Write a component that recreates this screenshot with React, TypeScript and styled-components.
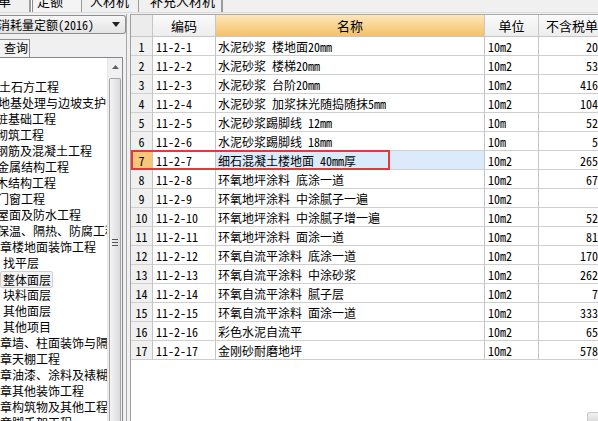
import styled, { createGlobalStyle, css } from 'styled-components';

const GlobalStyle = createGlobalStyle`
  html, body {
    margin: 0;
    padding: 0;
  }
  body {
    background: #f0f0f0;
    overflow: hidden;
    font-family: 'Noto Sans Mono CJK SC', 'Noto Sans CJK SC', sans-serif;
    font-size: 12px;
    color: #000;
  }
`;

const Window = styled.div`
  width: 598px;
  height: 421px;
  display: flex;
  flex-direction: column;
  overflow: hidden;
`;

/* top tab strip, mostly scrolled out of view */
const TabStrip = styled.div`
  flex: none;
  height: 12px;
  display: flex;
  align-items: flex-end;
  overflow: hidden;
  border-bottom: 1px solid #dadada;
`;

const Tab = styled.div<{ $w: number; $pad: number; $active?: boolean }>`
  flex: none;
  box-sizing: border-box;
  width: ${(p) => p.$w}px;
  height: 24px;
  padding: 0 0 0 ${(p) => p.$pad}px;
  display: flex;
  align-items: center;
  font-size: 13px;
  white-space: nowrap;
  overflow: hidden;
  border-right: 1px solid #9c9c9c;
  ${(p) =>
    p.$active &&
    css`
      border-left: 1px solid #9c9c9c;
      box-shadow: inset 1px 0 0 #fff, inset 2px 0 0 #8a8a8a;
      background: #f4f4f4;
    `}
`;

const Main = styled.div`
  flex: 1;
  min-height: 0;
  display: flex;
  gap: 3px;
  padding-top: 1px;
`;

/* left side: library picker + chapter tree */
const LeftPanel = styled.div`
  flex: none;
  width: 127px;
  display: flex;
  flex-direction: column;
  border-right: 1px solid #a8a8a8;
  box-sizing: border-box;
`;

const Dropdown = styled.div`
  flex: none;
  box-sizing: border-box;
  height: 19px;
  margin-top: 1px;
  display: flex;
  align-items: center;
  justify-content: space-between;
  padding-right: 5px;
  border: 1px solid #8e8e8e;
  border-left: none;
  border-radius: 0 3px 3px 0;
  background: linear-gradient(#f7f7f7, #e3e3e3);
  white-space: nowrap;
  overflow: hidden;

  span {
    margin-left: -2px;
  }
`;

const QueryTab = styled.div`
  flex: none;
  box-sizing: border-box;
  width: 30px;
  height: 18px;
  margin-top: 5px;
  padding-left: 4px;
  line-height: 16px;
  white-space: nowrap;
  overflow: hidden;
  border: 1px solid #8e8e8e;
  border-left: none;
  border-bottom: none;
  background: #f4f4f4;
`;

const ListBox = styled.div`
  flex: 1;
  min-height: 0;
  width: 123px;
  box-sizing: border-box;
  display: flex;
  border: 1px solid #828790;
  border-left: none;
  border-bottom: none;
  background: #fff;
`;

const Tree = styled.div`
  flex: 1;
  min-width: 0;
  overflow: hidden;
  padding-top: 21px;
`;

const TreeItem = styled.div<{ $shift?: number; $selected?: boolean }>`
  height: 16px;
  line-height: 16px;
  white-space: nowrap;

  span {
    display: inline-block;
    margin-left: ${(p) => p.$shift ?? 0}px;
    padding: 0 1px;
    line-height: 15px;
    ${(p) =>
      p.$selected &&
      css`
        background: #f3f3f3;
        border: 1px solid #cfcfcf;
        border-radius: 2px;
        margin-left: 0;
        padding: 0 1px 0 2px;
      `}
  }
`;

const ScrollBar = styled.div`
  flex: none;
  width: 14px;
  display: flex;
  flex-direction: column;
  background: #f0f0f0;
  border-left: 1px solid #e6e6e6;
`;

const ScrollArrow = styled.div`
  flex: none;
  height: 18px;
  display: flex;
  align-items: center;
  justify-content: center;
`;

const Thumb = styled.div`
  flex: 1;
  margin: 2px 1px 0;
  padding-bottom: 16px;
  border: 1px solid #a4a4a4;
  border-bottom: none;
  border-radius: 2px 2px 0 0;
  background: linear-gradient(to right, #f4f4f4, #dadada);
  display: flex;
  align-items: center;
  justify-content: center;
`;

const Grip = styled.div`
  width: 6px;
  height: 7px;
  background: repeating-linear-gradient(#555 0 1px, transparent 1px 3px);
`;

/* right side: quota grid */
const Grid = styled.div`
  flex: 1;
  min-width: 0;
  position: relative;
  overflow: hidden;
  background: #fff;
  border-top: 1px solid #a9a9a9;
  border-left: 1px solid #a0a0a0;
`;

const COLS = '22px 63px 269px 54px 80px';

const HeaderRow = styled.div`
  width: 488px;
  height: 22px;
  display: grid;
  grid-template-columns: ${COLS};
`;

const HeadCell = styled.div<{ $hot?: boolean; $corner?: boolean }>`
  box-sizing: border-box;
  display: flex;
  align-items: center;
  justify-content: center;
  font-size: 13px;
  white-space: nowrap;
  border-right: 1px solid #c6c6c6;
  border-bottom: 1px solid #c6c6c6;
  background: ${(p) =>
    p.$hot
      ? 'linear-gradient(#fde6bb, #f4c168)'
      : p.$corner
      ? '#ececec'
      : 'linear-gradient(#fafafa, #ededed)'};
`;

const Row = styled.div`
  width: 488px;
  height: 19px;
  display: grid;
  grid-template-columns: ${COLS};
`;

const Cell = styled.div<{ $align?: 'left' | 'center' | 'right'; $bg?: string }>`
  box-sizing: border-box;
  display: flex;
  align-items: center;
  justify-content: ${(p) =>
    p.$align === 'center' ? 'center' : p.$align === 'right' ? 'flex-end' : 'flex-start'};
  padding: 0 ${(p) => (p.$align === 'right' ? 2 : 0)}px 0 ${(p) => (p.$align === 'left' ? 3 : 0)}px;
  white-space: nowrap;
  overflow: hidden;
  border-right: 1px solid #c4c4c4;
  border-bottom: 1px solid #cfcfcf;
  background: ${(p) => p.$bg ?? '#fff'};
`;

const NameCell = styled(Cell)`
  padding-left: 2px;
`;

const Highlight = styled.div`
  position: absolute;
  left: 0;
  top: 135px;
  width: 259px;
  height: 20px;
  box-sizing: border-box;
  border: 2px solid #e2393c;
  pointer-events: none;
`;

const Corner = styled.div`
  position: absolute;
  right: 0;
  bottom: 0;
  width: 10px;
  height: 8px;
  border-radius: 3px 0 0 0;
  background: linear-gradient(#f2f2f2, #dcdcdc);
  border: 1px solid #c8c8c8;
  border-right: none;
  border-bottom: none;
`;

const tabs = [
  { label: '清单', w: 30, pad: 0, hide: true },
  { label: '定额', w: 52, pad: 6, active: true },
  { label: '人材机', w: 57, pad: 8 },
  { label: '补充人材机', w: 83, pad: 11 },
  { label: '', w: 0, pad: 0 },
];

const chapters: { text: string; shift?: number; selected?: boolean }[] = [
  { text: '土石方工程', shift: -2 },
  { text: '地基处理与边坡支护', shift: -3 },
  { text: '桩基础工程', shift: -5 },
  { text: '砌筑工程', shift: -5 },
  { text: '钢筋及混凝土工程', shift: -5 },
  { text: '金属结构工程', shift: -4 },
  { text: '木结构工程', shift: -5 },
  { text: '门窗工程', shift: -4 },
  { text: '屋面及防水工程', shift: -4 },
  { text: '保温、隔热、防腐工程', shift: -4 },
  { text: '章楼地面装饰工程', shift: -1 },
  { text: '找平层', shift: 2 },
  { text: '整体面层', shift: 2, selected: true },
  { text: '块料面层', shift: 2 },
  { text: '其他面层', shift: 2 },
  { text: '其他项目', shift: 2 },
  { text: '章墙、柱面装饰与隔断', shift: -1 },
  { text: '章天棚工程', shift: -1 },
  { text: '章油漆、涂料及裱糊工程', shift: -1 },
  { text: '章其他装饰工程', shift: -1 },
  { text: '章构筑物及其他工程', shift: -1 },
  { text: '章脚手架工程', shift: -1 },
];

const rows = [
  ['11-2-1', '水泥砂浆 楼地面20mm', '10m2', '20.73'],
  ['11-2-2', '水泥砂浆 楼梯20mm', '10m2', '53.18'],
  ['11-2-3', '水泥砂浆 台阶20mm', '10m2', '416.52'],
  ['11-2-4', '水泥砂浆 加浆抹光随捣随抹5mm', '10m2', '104.37'],
  ['11-2-5', '水泥砂浆踢脚线 12mm', '10m', '52.64'],
  ['11-2-6', '水泥砂浆踢脚线 18mm', '10m', '5.81'],
  ['11-2-7', '细石混凝土楼地面 40mm厚', '10m2', '265.09'],
  ['11-2-8', '环氧地坪涂料 底涂一道', '10m2', '67.45'],
  ['11-2-9', '环氧地坪涂料 中涂腻子一遍', '10m2', '8.6'],
  ['11-2-10', '环氧地坪涂料 中涂腻子增一遍', '10m2', '52.33'],
  ['11-2-11', '环氧地坪涂料 面涂一道', '10m2', '81.27'],
  ['11-2-12', '环氧自流平涂料 底涂一道', '10m2', '170.56'],
  ['11-2-13', '环氧自流平涂料 中涂砂浆', '10m2', '262.14'],
  ['11-2-14', '环氧自流平涂料 腻子层', '10m2', '7.92'],
  ['11-2-15', '环氧自流平涂料 面涂一道', '10m2', '333.48'],
  ['11-2-16', '彩色水泥自流平', '10m2', '65.70'],
  ['11-2-17', '金刚砂耐磨地坪', '10m2', '578.21'],
];

const SELECTED = 7;

export default function App() {
  return (
    <>
      <GlobalStyle />
      <Window>
        <TabStrip>
          {tabs.map((t, i) => (
            <Tab key={i} $w={t.w} $pad={t.pad} $active={t.active}>
              {t.hide ? <span style={{ marginLeft: -15 }}>{t.label}</span> : t.label}
            </Tab>
          ))}
        </TabStrip>
        <Main>
          <LeftPanel>
            <Dropdown>
              <span>消耗量定额(2016)</span>
              <svg width="8" height="5" viewBox="0 0 8 5">
                <polygon points="0,0 8,0 4,5" fill="#222" />
              </svg>
            </Dropdown>
            <QueryTab>查询</QueryTab>
            <ListBox>
              <Tree>
                {chapters.map((c, i) => (
                  <TreeItem key={i} $shift={c.shift} $selected={c.selected}>
                    <span>{c.text}</span>
                  </TreeItem>
                ))}
              </Tree>
              <ScrollBar>
                <ScrollArrow>
                  <svg width="7" height="4" viewBox="0 0 7 4">
                    <polygon points="0,4 7,4 3.5,0" fill="#606060" />
                  </svg>
                </ScrollArrow>
                <Thumb>
                  <Grip />
                </Thumb>
              </ScrollBar>
            </ListBox>
          </LeftPanel>
          <Grid>
            <HeaderRow>
              <HeadCell $corner />
              <HeadCell>编码</HeadCell>
              <HeadCell $hot>名称</HeadCell>
              <HeadCell>单位</HeadCell>
              <HeadCell>不含税单价</HeadCell>
            </HeaderRow>
            {rows.map(([code, name, unit, price], i) => {
              const sel = i + 1 === SELECTED;
              return (
                <Row key={code}>
                  <Cell $align="center" $bg={sel ? '#f8c678' : '#f0f0f0'}>
                    {i + 1}
                  </Cell>
                  <Cell $align="left">{code}</Cell>
                  <NameCell $align="left" $bg={sel ? '#dcebfb' : undefined}>
                    {name}
                  </NameCell>
                  <Cell $align="left">{unit}</Cell>
                  <Cell $align="right">{price}</Cell>
                </Row>
              );
            })}
            <Highlight />
            <Corner />
          </Grid>
        </Main>
      </Window>
    </>
  );
}
